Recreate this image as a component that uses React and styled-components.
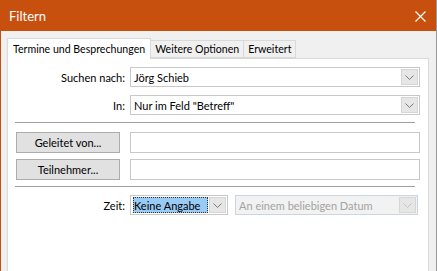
import React from 'react';
import styled, { createGlobalStyle } from 'styled-components';

const Global = createGlobalStyle`
	html, body { margin: 0; padding: 0; background: #f0f0f0; }
	* { box-sizing: border-box; }
	body { font-family: Lato, "Open Sans", sans-serif; font-size: 11px; color: #000; }
`

const Window = styled.div`
	width: 437px;
	height: 271px;
	display: flex;
	flex-direction: column;
	background: #f0f0f0;
	border-left: 1px solid #c8500f;
	border-right: 1px solid #9a9a9a;
	overflow: hidden;
`

const TitleBar = styled.div`
	height: 31px;
	flex: none;
	background: #c8500f;
	color: #fff;
	display: flex;
	align-items: center;
	justify-content: space-between;
	padding: 0 10px 0 8px;
	font-size: 13px;
`

const Close = styled.svg`
	width: 11px;
	height: 11px;
	margin-top: 1px;
`

const Body = styled.div`
	flex: 1;
	display: flex;
	flex-direction: column;
	padding: 7px 7px 0 6px;
`

const TabStrip = styled.div`
	display: flex;
	align-items: flex-end;
	height: 20px;
	position: relative;
	z-index: 1;
`

const Tab = styled.div`
	height: ${p => (p.$active ? '21px' : '18px')};
	margin-bottom: ${p => (p.$active ? '-1px' : '0')};
	padding: 0 ${p => (p.$active ? '5px' : '4px')} 1px;
	display: flex;
	align-items: center;
	background: ${p => (p.$active ? '#fff' : '#f0f0f0')};
	border: 1px solid #d9d9d9;
	border-bottom: ${p => (p.$active ? 'none' : '1px solid #d9d9d9')};
	margin-right: -1px;
	white-space: nowrap;
	font-size: 10.6px;
`

const Panel = styled.div`
	flex: 1;
	background: #fff;
	border: 1px solid #d9d9d9;
	border-bottom: none;
	padding: 7px 8px 0 7px;
	display: flex;
	flex-direction: column;
`

const Row = styled.div`
	display: flex;
	align-items: center;
	margin-top: ${p => p.$gap || 0}px;
`

const Label = styled.div`
	width: 110px;
	text-align: right;
	margin-right: 5px;
	flex: none;
`

const Combo = styled.div`
	height: 20px;
	width: ${p => (p.$width ? p.$width + 'px' : 'auto')};
	flex: ${p => (p.$width ? 'none' : 1)};
	display: flex;
	align-items: stretch;
	border: 1px solid ${p => (p.$disabled ? '#ccd6e2' : '#c8c8c8')};
	background: ${p => (p.$disabled ? '#f2f2f2' : '#fff')};
	color: ${p => (p.$disabled ? '#a2a2a2' : '#000')};
	margin-left: ${p => p.$offset || 0}px;
	margin-right: ${p => p.$end || 0}px;
`

const ComboText = styled.div`
	flex: 1;
	display: flex;
	align-items: center;
	padding-left: 3px;
	white-space: nowrap;
	overflow: hidden;
`

const Selected = styled.span`
	display: flex;
	align-items: center;
	height: 16px;
	width: 77px;
	margin-left: -1px;
	padding-left: 1px;
	background: #99cbf5;
	outline: 1px dotted #333;
	outline-offset: -1px;
`

const DropButton = styled.div`
	width: 17px;
	margin: 1px;
	display: flex;
	align-items: center;
	justify-content: center;
	background: #e6e6e6;
	border: 1px solid #d6d6d6;
`

const Separator = styled.div`
	height: 1px;
	background: #a0a0a0;
	margin: ${p => p.$top}px 5px 0 0;
	box-shadow: 0 1px 0 #fff;
`

const Button = styled.div`
	width: 104px;
	height: 21px;
	margin-left: 1px;
	margin-right: 10px;
	flex: none;
	display: flex;
	align-items: center;
	justify-content: center;
	background: #e1e1e1;
	border: 1px solid #adadad;
`

const Field = styled.div`
	flex: 1;
	height: 21px;
	border: 1px solid #c8c8c8;
	background: #fff;
`

const Chevron = ({ color = '#7a7a7a' }) => (
	<svg width="9" height="5" viewBox="0 0 9 5">
		<path d="M0.5 0.5 L4.5 4.5 L8.5 0.5" fill="none" stroke={color} strokeWidth="1" />
	</svg>
);

const App = () => (
	<>
		<Global />
		<Window>
			<TitleBar>
				<span>Filtern</span>
				<Close viewBox="0 0 11 11">
					<path d="M0.5 0.5 L10.5 10.5 M10.5 0.5 L0.5 10.5" stroke="#fff" strokeWidth="1.2" />
				</Close>
			</TitleBar>
			<Body>
				<TabStrip>
					<Tab $active>Termine und Besprechungen</Tab>
					<Tab>Weitere Optionen</Tab>
					<Tab>Erweitert</Tab>
				</TabStrip>
				<Panel>
					<Row $gap={1}>
						<Label>Suchen nach:</Label>
						<Combo>
							<ComboText>Jörg Schieb</ComboText>
							<DropButton><Chevron /></DropButton>
						</Combo>
					</Row>
					<Row $gap={8}>
						<Label>In:</Label>
						<Combo>
							<ComboText>Nur im Feld "Betreff"</ComboText>
							<DropButton><Chevron /></DropButton>
						</Combo>
					</Row>
					<Separator $top={7} />
					<Row $gap={9}>
						<Button>Geleitet von...</Button>
						<Field />
					</Row>
					<Row $gap={6}>
						<Button>Teilnehmer...</Button>
						<Field />
					</Row>
					<Separator $top={6} />
					<Row $gap={8}>
						<Label>Zeit:</Label>
						<Combo $width={98}>
							<ComboText><Selected>Keine Angabe</Selected></ComboText>
							<DropButton><Chevron /></DropButton>
						</Combo>
						<Combo $disabled $offset={7} $end={2}>
							<ComboText>An einem beliebigen Datum</ComboText>
							<DropButton><Chevron color="#c4c4c4" /></DropButton>
						</Combo>
					</Row>
				</Panel>
			</Body>
		</Window>
	</>
);

export default App;
